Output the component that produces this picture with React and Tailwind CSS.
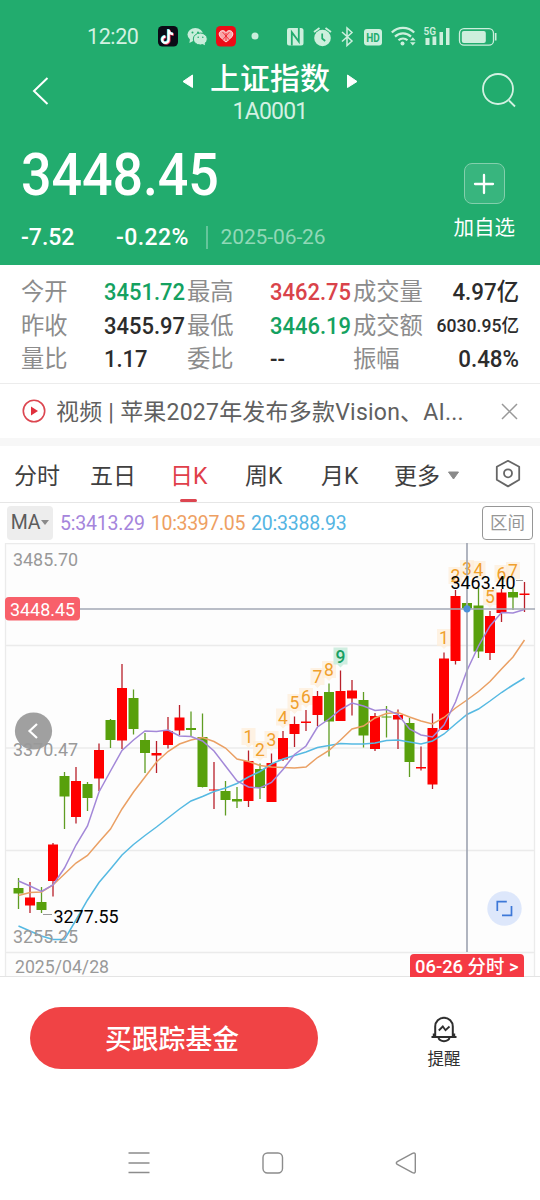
import { Fragment } from 'react';

const STATS = [
  [
    { label: '今开', value: '3451.72', color: 'text-[#14a160]' },
    { label: '最高', value: '3462.75', color: 'text-[#d9434a]' },
    { label: '成交量', value: '4.97亿', color: 'text-[#2c2c2c]' },
  ],
  [
    { label: '昨收', value: '3455.97', color: 'text-[#2c2c2c]' },
    { label: '最低', value: '3446.19', color: 'text-[#14a160]' },
    { label: '成交额', value: '6030.95亿', color: 'text-[#2c2c2c]', small: true },
  ],
  [
    { label: '量比', value: '1.17', color: 'text-[#2c2c2c]' },
    { label: '委比', value: '--', color: 'text-[#2c2c2c]' },
    { label: '振幅', value: '0.48%', color: 'text-[#2c2c2c]' },
  ],
];

// [up, bodyTop, bodyBottom, high, low]
const CANDLES = [
  [0, 888, 893.5, 878, 909], [1, 897.5, 905.5, 882, 913], [0, 902, 910, 887, 913],
  [1, 844.5, 881, 843, 896.5], [0, 776, 796.5, 772, 829], [1, 781, 817, 767, 823.5],
  [0, 784, 798, 782, 811], [1, 750, 778.5, 743.5, 791], [0, 720, 740, 719, 748],
  [1, 688, 740.5, 664, 749], [0, 698, 729, 689.5, 734.5], [0, 740, 753, 733, 773],
  [1, 753, 755.5, 741, 773], [1, 731, 745, 717, 748.5], [1, 717.5, 730.5, 705, 735],
  [0, 728, 730, 711.5, 736], [0, 737, 787, 713.5, 787.5], [1, 789.5, 790.5, 762, 809],
  [0, 791, 800, 781, 815.5], [0, 799, 801.5, 787, 808], [1, 761, 801, 750.5, 807],
  [0, 769, 788, 763.5, 799], [1, 763, 802, 753.5, 802], [1, 738, 759.5, 731, 761],
  [1, 724, 734, 716.5, 747], [1, 721.5, 723, 710, 731], [1, 696, 715, 691, 726],
  [0, 692, 721.5, 683.5, 756.5], [1, 691, 721, 670.5, 721], [1, 690.5, 698.5, 680, 715.5],
  [0, 700, 735.5, 692, 747.5], [1, 716, 749, 713, 751], [0, 716.5, 717.5, 706, 737.5],
  [1, 715, 719.5, 709.5, 749], [0, 723, 762, 718, 777], [1, 767, 768.5, 746.5, 770.5],
  [1, 728, 784.5, 713.5, 789], [1, 658.5, 730, 652.5, 730], [1, 596, 661, 590, 664.5],
  [0, 603, 608.5, 603, 608.5], [0, 605.5, 651.5, 588, 658], [1, 616, 653, 611, 660],
  [1, 592.5, 613, 589, 622], [0, 592, 597.5, 588, 610], [1, 593.5, 595, 582, 612],
];

const MA5 = [
  881, 886, 891.5, 885, 868, 845, 826, 792, 771, 750.5, 740, 731, 731.5, 730, 736, 736.5, 741, 751, 766, 781,
  787, 788, 782.5, 769.5, 754.5, 746, 727, 719, 709.5, 703, 706, 710.5, 709.5, 714.5, 729, 735, 737, 725, 702,
  670.5, 646, 626, 612.5, 613, 609.5,
];
const MA10 = [
  895.5, 892.5, 892, 885, 874, 863, 855.5, 842, 829, 809, 792, 777, 762, 751.5, 744, 740, 737.5, 741.5, 748, 759,
  761.5, 765.5, 767, 767.5, 768, 767, 757.5, 750.5, 740, 729, 726, 718, 713.5, 712.5, 717, 721, 724, 717.5, 708,
  700, 691.5, 681.5, 669, 657, 640,
];
const MA20 = [
  926, 931, 936, 939.5, 939.5, 920, 900, 882.5, 869, 855, 844.5, 835.5, 827, 818, 809, 801, 796.5, 791.5, 788,
  783.5, 777, 771.5, 764, 759, 755.5, 752, 747.5, 745.5, 743.5, 744, 744, 743, 740.5, 740, 742, 744, 741, 734,
  724, 714.5, 709, 701, 692.5, 685, 678,
];

// [candle index, center y, digit]
const TURNS = [
  [20, 737, 1], [21, 750, 2], [22, 740, 3], [23, 717.5, 4], [24, 703, 5], [25, 697, 6], [26, 677, 7], [27, 670, 8],
  [28, 656.5, 9], [37, 638, 1], [38, 576, 2], [39, 569, 3], [40, 570, 4], [41, 597, 5], [42, 574, 6], [43, 571, 7],
];

const xAt = (i) => 18.5 + i * 11.5;
const toPoints = (ys) => ys.map((y, i) => `${xAt(i)},${y}`).join(' ');

function StatusBar() {
  return (
    <div className="flex h-[72px] items-center text-[#d3f1e2]">
      <span className="ml-[87px] w-[71px] pt-[2px] text-[21.5px] leading-none tracking-[-0.4px]">12:20</span>
      <svg width="350" height="28" viewBox="158 22 350 28" fill="none">
        <rect x="158" y="26" width="20" height="20.5" rx="4.5" fill="#0b0a16" />
        <g strokeWidth="2.3">
          <path d="M168.6 29.4v10.3a3.2 3.2 0 1 1-3.2-3.2M168.6 30c.4 2.4 2 3.8 4.5 4" stroke="#f5385c" transform="translate(.8 .7)" />
          <path d="M168.6 29.4v10.3a3.2 3.2 0 1 1-3.2-3.2M168.6 30c.4 2.4 2 3.8 4.5 4" stroke="#35e3e0" transform="translate(-.6 -.4)" />
          <path d="M168.6 29.4v10.3a3.2 3.2 0 1 1-3.2-3.2M168.6 30c.4 2.4 2 3.8 4.5 4" stroke="#fff" />
        </g>
        {/* wechat */}
        <g fill="#c9eddb">
          <ellipse cx="195.3" cy="34.6" rx="7.800" ry="6.600" />
          <path d="M190 39l-.6 4 4.200-2.200z" />
          <ellipse cx="200.300" cy="39" rx="7" ry="6" stroke="#22ac6e" />
          <path d="M202 43.800l3 1.400-.4-3z" />
        </g>
        <g fill="#22ac6e">
          <circle cx="192.500" cy="32.500" r="1" /><circle cx="198" cy="32.500" r="1" />
          <circle cx="198.200" cy="37.300" r=".8" /><circle cx="202.800" cy="37.300" r=".8" />
        </g>
        <rect x="216" y="26" width="20" height="20.500" rx="4.500" fill="#ee0a16" />
        <path d="M226 32.500c2-3 6.800-2.200 6.800 1.500 0 3-3.800 5.700-6.800 8-3-2.300-6.800-5-6.800-8 0-3.700 4.800-4.500 6.800-1.500z" fill="#f8a5a8" stroke="#ffe3e3" />
        <path d="M222.500 32l7 8M229.500 32l-7 8M226 33v8" stroke="#ee0a16" strokeWidth=".7" />
        <circle cx="255" cy="36" r="3.500" fill="#c9eddb" />
        {/* NFC */}
        <path d="M289 28h12a2.500 2.500 0 0 1 2.500 2.500v12.500a2.500 2.500 0 0 1-2.500 2.500h-12a2 2 0 0 1-2-2v-13.500a2 2 0 0 1 2-2z" fill="#cdefdd" />
        <path d="M291.800 45.500V32.200l7 9.300V28" stroke="#22ac6e" strokeWidth="1.800" />
        {/* alarm */}
        <circle cx="322.500" cy="38" r="8.300" fill="#cdefdd" />
        <path d="M322.200 33.500V38.500l3 2.500" stroke="#22ac6e" strokeWidth="1.700" />
        <path d="M314 32l5.500-4M331 32l-5.500-4" stroke="#cdefdd" strokeWidth="1.800" />
        <path d="M342 32l10 9-5 4.500v-17.500l5 4.500-10 9" stroke="#cdefdd" strokeWidth="1.500" />
        <rect x="364" y="29" width="18" height="16.500" rx="3" fill="#cdefdd" />
        <text x="373" y="42" textAnchor="middle" textLength="13.500" lengthAdjust="spacingAndGlyphs" fontSize="12.500" fontWeight="700" fill="#22ac6e">HD</text>
        {/* wifi */}
        <g stroke="#cdefdd" strokeWidth="2.200">
          <path d="M391.800 32.500a16 16 0 0 1 22.400 0" />
          <path d="M395 36.600a11.500 11.500 0 0 1 16 0" />
          <path d="M398.500 40.300a6.500 6.500 0 0 1 9 0" />
        </g>
        <circle cx="402.500" cy="43.500" r="2" fill="#cdefdd" />
        <path d="M410 40.500l2.800-3.300 2.800 3.300zM410 42.300l2.800 3.300 2.800-3.300z" fill="#cdefdd" />
        {/* signal */}
        <text x="423.500" y="35" textLength="12.500" lengthAdjust="spacingAndGlyphs" fontSize="11.500" fontWeight="600" fill="#cdefdd">5G</text>
        <path d="M425.500 38h4v7h-4zM432.500 36.500h3.800v8.500h-3.800zM439.500 32h3.500v13h-3.500zM446 28h3.500v17h-3.500z" fill="#cdefdd" />
        <rect x="459.500" y="28.700" width="34" height="16.500" rx="4.500" stroke="#cdefdd" strokeWidth="1.300" />
        <rect x="461.800" y="31" width="24" height="12" rx="2" fill="#cdefdd" />
        <path d="M495.700 33v7.500" stroke="#cdefdd" strokeWidth="1.600" />
      </svg>
    </div>
  );
}

function Header() {
  return (
    <header className="h-[265px] bg-[#22ac6e] text-white">
      <StatusBar />
      <div className="-mt-[14px] flex h-[68px] items-start">
        <svg className="ml-[32px] mt-[18px]" width="18" height="30" fill="none" stroke="#fff" strokeWidth="2">
          <path d="M15.500 2L2 15l13.500 13" />
        </svg>
        <div className="ml-[132px] flex w-[176px] flex-col items-center">
          <div className="flex h-[42px] items-center justify-center">
            <svg className="mt-[3px]" width="11" height="16"><path d="M10.500 2v12.500L1 8.500z" fill="#fff" stroke="#fff" strokeLinejoin="round" /></svg>
            <h1 className="mx-[17px] whitespace-nowrap text-[30px] font-medium leading-[42px]">上证指数</h1>
            <svg className="mt-[3px]" width="11" height="16"><path d="M.5 2v12.500L10 8.500z" fill="#fff" stroke="#fff" strokeLinejoin="round" /></svg>
          </div>
          <span className="text-[23px] leading-[24px] tracking-[-0.8px] text-[#d3f1e2]">1A0001</span>
        </div>
        <svg className="ml-[124px] mt-[15px]" width="36" height="36" fill="none" stroke="#d3f1e2" strokeWidth="1.800">
          <circle cx="16" cy="16" r="15" />
          <path d="M27 27.500l6 6" />
        </svg>
      </div>
      <div className="flex justify-between pl-[21px] pr-[25px]">
        <div>
          <p className="mt-[15px] w-[205px] origin-left scale-x-[0.92] text-[58.5px] font-medium leading-[68px] tracking-[-0.1px]">3448.45</p>
          <div className="mt-[14px] flex h-[28px] items-center text-[23px] font-medium leading-none">
            <span className="w-[95px]">-7.52</span>
            <span className="w-[90px] whitespace-nowrap tracking-[0.4px]">-0.22%</span>
            <span className="h-[23px] w-[1.500px] bg-[#64c59b]" />
            <span className="ml-[13px] text-[21px] font-normal tracking-[-0.1px] text-[#91d8b7]">2025-06-26</span>
          </div>
        </div>
        <div className="flex flex-col items-center pt-[37px]">
          <div className="flex size-[41px] items-center justify-center rounded-lg border border-[#83cfac] bg-[#38b57e]">
            <svg width="22" height="22" stroke="#fff" strokeWidth="2.300" strokeLinecap="round"><path d="M2 11h18M11 2v18" /></svg>
          </div>
          <span className="mt-[9px] text-[20.500px] leading-[30px]">加自选</span>
        </div>
      </div>
    </header>
  );
}

function Stats() {
  return (
    <section className="grid h-[119px] grid-cols-[83px_83px_83px_83px_74px_92px] grid-rows-[33.500px_33.500px_33.500px] border-b border-[#ececec] pl-[21px] pt-[10px]">
      {STATS.map((row) => row.map((item, col) => (
        <Fragment key={item.label}>
          <span className="whitespace-nowrap text-[23.300px] leading-[34px] text-[#8c8c8c]">{item.label}</span>
          <span className={`whitespace-nowrap font-medium leading-[34px] ${item.color} ${col === 2 ? 'origin-right scale-x-[0.95] text-right' : 'origin-left scale-x-[0.935]'} ${item.small ? 'text-[18.500px]' : 'text-[23.500px]'}`}>
            {item.value}
          </span>
        </Fragment>
      )))}
    </section>
  );
}

function NewsLine() {
  return (
    <section className="flex h-[62px] items-center border-b-8 border-[#f7f7f7] pl-[22px] pr-[22px]">
      <svg width="24" height="24" fill="none">
        <circle cx="12" cy="12" r="10.700" stroke="#dc4650" strokeWidth="1.600" />
        <path d="M9 7.500v9l7-4.500z" fill="#e0303d" />
      </svg>
      <p className="ml-[10px] flex-1 whitespace-nowrap pt-[3px] text-[23px] leading-[34px] tracking-[0.220px] text-[#606060]">视频 | 苹果2027年发布多款Vision、AI...</p>
      <svg width="17" height="17" stroke="#999" strokeWidth="1.500"><path d="M1 1l15 15M16 1L1 16" /></svg>
    </section>
  );
}

function Tabs() {
  return (
    <nav className="flex h-[57px] items-center border-b border-[#e6e6e6] pl-[14px] text-[23px] leading-[34px] text-[#404040]">
      <span className="w-[76px] pt-[6px]">分时</span>
      <span className="w-[80px] pt-[6px]">五日</span>
      <span className="relative flex h-full w-[75px] items-center pt-[6px] text-[#e0404a]">
        日K
        <i className="absolute bottom-0 left-[10px] h-[3px] w-[17px] rounded-full bg-[#dc4550]" />
      </span>
      <span className="w-[76px] pt-[6px]">周K</span>
      <span className="w-[73px] pt-[6px]">月K</span>
      <span className="pt-[6px]">更多</span>
      <svg className="ml-[7px] mt-[3px]" width="13" height="10"><path d="M1.500 1h10L6.500 8z" fill="#8a8a8a" stroke="#8a8a8a" strokeLinejoin="round" /></svg>
      <svg className="ml-[34px]" width="28" height="30" fill="none" stroke="#666" strokeWidth="1.800" strokeLinejoin="round">
        <path d="M14 1.800l11.200 6v13L14 27.400 2.800 20.800v-13z" />
        <circle cx="14" cy="14.300" r="4" />
      </svg>
    </nav>
  );
}

function MaRow() {
  return (
    <div className="flex h-[40px] items-center pl-[7px] pr-[7px] text-[19.500px] leading-none tracking-[-0.2px]">
      <span className="flex h-[34px] w-[46px] items-center justify-center rounded bg-[#ededed] text-[19.500px] text-[#5c5c5c]">
        MA
        <svg className="ml-px" width="8" height="6"><path d="M0 0h8L4 5z" fill="#8a8a8a" /></svg>
      </span>
      <span className="ml-[7px] w-[91px] whitespace-nowrap pt-[2px] text-[#a585dc]">5:3413.29</span>
      <span className="w-[100px] whitespace-nowrap pt-[2px] tracking-[-0.35px] text-[#eea062]">10:3397.05</span>
      <span className="flex-1 whitespace-nowrap pt-[2px] text-[#55b5e3]">20:3388.93</span>
      <button className="h-[34px] w-[51px] rounded border-[1.500px] border-[#969696] pt-[2px] text-[17.500px] tracking-normal text-[#969696]">区间</button>
    </div>
  );
}

function AxisText({ x, y, width, color = '#999', children }) {
  return (
    <text x={x} y={y} fill={color} fontSize="18.500" textLength={width} lengthAdjust="spacingAndGlyphs">{children}</text>
  );
}

function KChart() {
  return (
    <svg className="block" width="540" height="434" viewBox="0 543 540 434" fill="none">
      <rect x="5.500" y="543" width="529" height="433.500" fill="#fdfdfd" />
      <path d="M5.500 543v433.500M534.500 543v433.500M5.500 543.500h529M5.500 645.500h529M5.500 748h529M5.500 850.500h529M5.500 952.500h529" stroke="#ebebeb" strokeWidth="1.300" />
      <path d="M0 976.500h540" stroke="#e4e4e4" />

      {TURNS.map(([i, y, n]) => {
        const nine = n === 9;
        const x = xAt(i);
        return (
          <path key={i} d={`M${x - 7} ${y - 9}h14v17h-4l-3 3-3-3h-4z`} fill={nine ? '#cfeee0' : '#fdeed9'} fillOpacity={nine ? 1 : 0.75} />
        );
      })}

      {CANDLES.map(([up, top, bottom, high, low], i) => (
        <g key={i}>
          <path d={`M${xAt(i)} ${high}V${low}`} stroke={up ? '#b8202a' : '#5f9d22'} strokeWidth="1.300" />
          <rect x={xAt(i) - 5} y={top} width="10" height={bottom - top} fill={up ? '#fe0000' : '#58a00c'} />
        </g>
      ))}

      <polyline points={toPoints(MA20)} stroke="#55b9e2" strokeWidth="1.500" />
      <polyline points={toPoints(MA10)} stroke="#eaa064" strokeWidth="1.500" />
      <polyline points={toPoints(MA5)} stroke="#a388d8" strokeWidth="1.500" />

      {TURNS.map(([i, y, n]) => (
        <text key={i} x={xAt(i)} y={y + 6.3} textAnchor="middle" fontSize="17.500" fill={n === 9 ? '#18a063' : '#f0a02c'} fontWeight={n === 9 ? 500 : 400}>{n}</text>
      ))}

      {/* crosshair */}
      <path d="M467 543v409M5 609h530" stroke="#a3a8b5" strokeWidth="1.700" />
      <circle cx="467" cy="608.800" r="3.600" fill="#4a90d9" />

      <rect x="5" y="597" width="75" height="23.500" rx="4" fill="#f8606a" />
      <AxisText x="10" y="615.500" width="65" color="#fff">3448.45</AxisText>

      <circle cx="33.500" cy="731" r="18.600" fill="#a0a0a0" />
      <path d="M37 724l-7.500 7 7.500 7" stroke="#fff" strokeWidth="2.200" />

      <AxisText x="13" y="566" width="65">3485.70</AxisText>
      <AxisText x="13" y="755.500" width="65">3370.47</AxisText>
      <AxisText x="13" y="942.500" width="65">3255.25</AxisText>
      <AxisText x="15" y="972.500" width="94">2025/04/28</AxisText>

      <path d="M43 914.500h9M516 580.500h7" stroke="#999" />
      <AxisText x="53.500" y="922.500" width="65" color="#000">3277.55</AxisText>
      <AxisText x="450.500" y="588.500" width="65" color="#000">3463.40</AxisText>

      <circle cx="504.500" cy="908.500" r="17.200" fill="#dde7fb" />
      <path d="M497.300 911v-9.300h9.500M511.500 906v9.300h-9.500" stroke="#3d78d8" strokeWidth="1.700" />

      <path d="M410 977v-19a4 4 0 0 1 4-4h106a4 4 0 0 1 4 4v19z" fill="#f53a44" />
      <text x="415" y="972.500" fontSize="18" fontWeight="500" fill="#fff" textLength="103.500" lengthAdjust="spacingAndGlyphs">06-26 分时 &gt;</text>
    </svg>
  );
}

function Actions() {
  return (
    <section className="flex h-[150px] items-start pl-[30px] pt-[30px]">
      <button className="h-[62px] w-[288px] rounded-full bg-[#f04345] pr-[4px] pt-[5px] text-[26.800px] font-medium leading-[57px] text-white">买跟踪基金</button>
      <div className="ml-[108px] flex w-[36px] flex-col items-center pt-[8px]">
        <svg width="28" height="28" fill="none" stroke="#2e2e2e" strokeWidth="2">
          <path d="M1.500 22H26.500M5.200 21V11.500a8.800 8.800 0 0 1 17.600 0V21M3.800 18.500v2.500l-1.800 1M24.200 18.500v2.500l1.800 1" />
          <path d="M8.500 23c1.500 4.200 9.500 4.200 11 0" />
          <path d="M8.800 15.500l4-4 2.700 3.700 4-3.700" strokeWidth="1.800" />
        </svg>
        <span className="mt-[5px] whitespace-nowrap text-[16.500px] leading-[24px] text-[#303030]">提醒</span>
      </div>
    </section>
  );
}

function NavBar() {
  return (
    <footer className="flex h-[72px] items-center justify-between pl-[128px] pr-[123px]">
      <svg width="22" height="24" stroke="#8c8c8c" strokeWidth="1.500"><path d="M.5 2h21M.5 12h21M.5 21.500h21" /></svg>
      <svg width="22" height="24" fill="none" stroke="#8c8c8c" strokeWidth="1.400"><rect x="1" y="2" width="19.500" height="20" rx="4.500" /></svg>
      <svg width="22" height="24" fill="none" stroke="#8c8c8c" strokeWidth="1.400" strokeLinejoin="round">
        <path d="M2.300 10.600L17.500 2.300q2.800-1 2.800 1.500v16.500q0 2.500-2.800 1.400L2.300 13.400q-2-1.400 0-2.800z" />
      </svg>
    </footer>
  );
}

export default function App() {
  return (
    <div className="h-[1200px] w-[540px] overflow-hidden bg-white font-['Roboto','Noto_Sans_CJK_SC',sans-serif]">
      <Header />
      <Stats />
      <NewsLine />
      <Tabs />
      <MaRow />
      <KChart />
      <Actions />
      <NavBar />
    </div>
  );
}
